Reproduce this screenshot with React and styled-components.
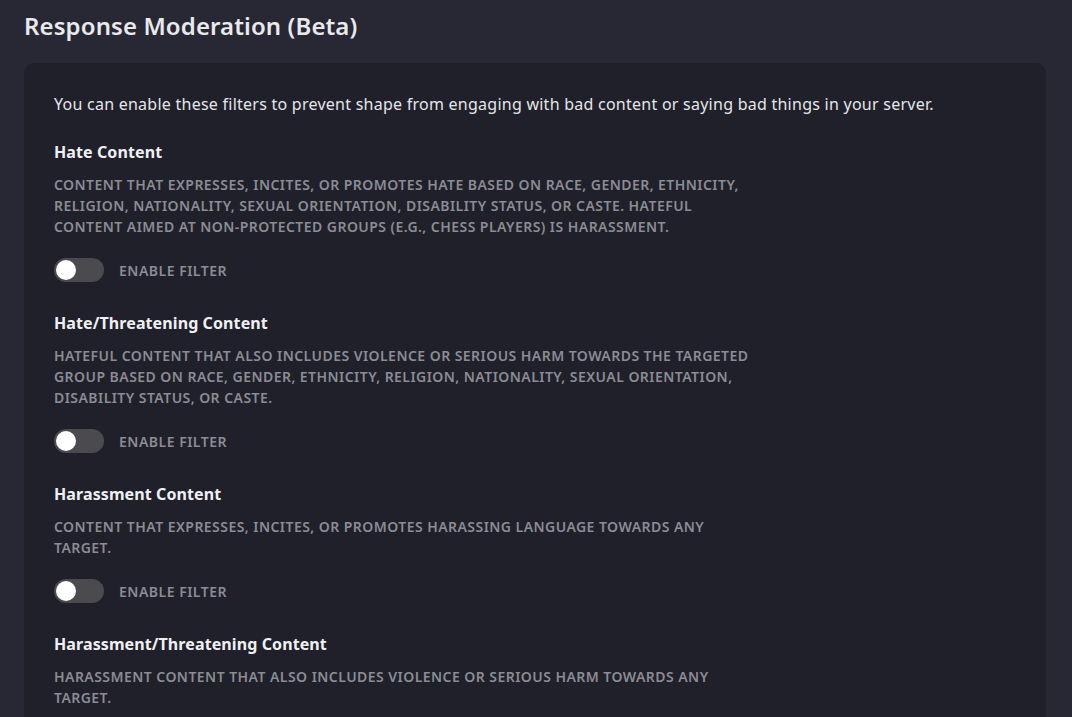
import React from "react";
import styled, { createGlobalStyle } from "styled-components";

const Global = createGlobalStyle`
  html, body { margin: 0; padding: 0; background: #272833; }
  body { font-family: "Noto Sans", sans-serif; -webkit-font-smoothing: antialiased; }
  * { box-sizing: border-box; }
`;

const Page = styled.div`
  padding: 8px 26px 0 24px;
  height: 717px;
  overflow: hidden;
`;

const Title = styled.h1`
  margin: 0 0 19px;
  font-size: 24px;
  line-height: 36px;
  font-weight: 600;
  color: #e9e9ee;
  font-family: "Noto Sans", sans-serif;
  letter-spacing: 0.1px;
`;

const Card = styled.div`
  background: #1f2029;
  border-radius: 10px;
  padding: 30px 30px 40px;
`;

const Intro = styled.p`
  margin: 0 0 26px;
  font-size: 16px;
  line-height: 22px;
  letter-spacing: 0.25px;
  color: #e6e6ea;
`;

const Section = styled.section`
  display: flex;
  flex-direction: column;
  margin-bottom: 30px;
`;

const Heading = styled.h3`
  margin: 0 0 11px;
  font-size: 16px;
  line-height: 22px;
  font-weight: 700;
  letter-spacing: 0.1px;
  color: #f0f0f4;
`;

const Desc = styled.p`
  margin: 0 0 21px;
  max-width: 700px;
  font-size: 14px;
  line-height: 21px;
  font-weight: 600;
  letter-spacing: 0.45px;
  color: #8b8c94;
  text-transform: uppercase;
`;

const ToggleRow = styled.label`
  display: flex;
  align-items: center;
  gap: 15px;
  cursor: pointer;
`;

const Track = styled.span`
  position: relative;
  width: 50px;
  height: 24px;
  border-radius: 12px;
  background: ${(p) => (p.$on ? "#5865f2" : "#4b4b4f")};
  flex-shrink: 0;
`;

const Knob = styled.span`
  position: absolute;
  top: 2px;
  left: ${(p) => (p.$on ? "28px" : "2px")};
  width: 20px;
  height: 20px;
  border-radius: 50%;
  background: #ffffff;
`;

const ToggleLabel = styled.span`
  font-size: 14px;
  font-weight: 600;
  color: #8b8c94;
  letter-spacing: 0.5px;
`;

const filters = [
  {
    title: "Hate Content",
    desc: "Content that expresses, incites, or promotes hate based on race, gender, ethnicity, religion, nationality, sexual orientation, disability status, or caste. Hateful content aimed at non-protected groups (e.g., chess players) is harassment.",
  },
  {
    title: "Hate/Threatening Content",
    desc: "Hateful content that also includes violence or serious harm towards the targeted group based on race, gender, ethnicity, religion, nationality, sexual orientation, disability status, or caste.",
  },
  {
    title: "Harassment Content",
    desc: "Content that expresses, incites, or promotes harassing language towards any target.",
  },
  {
    title: "Harassment/Threatening Content",
    desc: "Harassment content that also includes violence or serious harm towards any target.",
  },
];

function Toggle() {
  const [on, setOn] = React.useState(false);
  return (
    <ToggleRow onClick={() => setOn(!on)}>
      <Track $on={on}>
        <Knob $on={on} />
      </Track>
      <ToggleLabel>ENABLE FILTER</ToggleLabel>
    </ToggleRow>
  );
}

export default function App() {
  return (
    <Page>
      <Global />
      <Title>Response Moderation (Beta)</Title>
      <Card>
        <Intro>
          You can enable these filters to prevent shape from engaging with bad content or saying bad things in your server.
        </Intro>
        {filters.map((f) => (
          <Section key={f.title}>
            <Heading>{f.title}</Heading>
            <Desc>{f.desc}</Desc>
            <Toggle />
          </Section>
        ))}
      </Card>
    </Page>
  );
}
